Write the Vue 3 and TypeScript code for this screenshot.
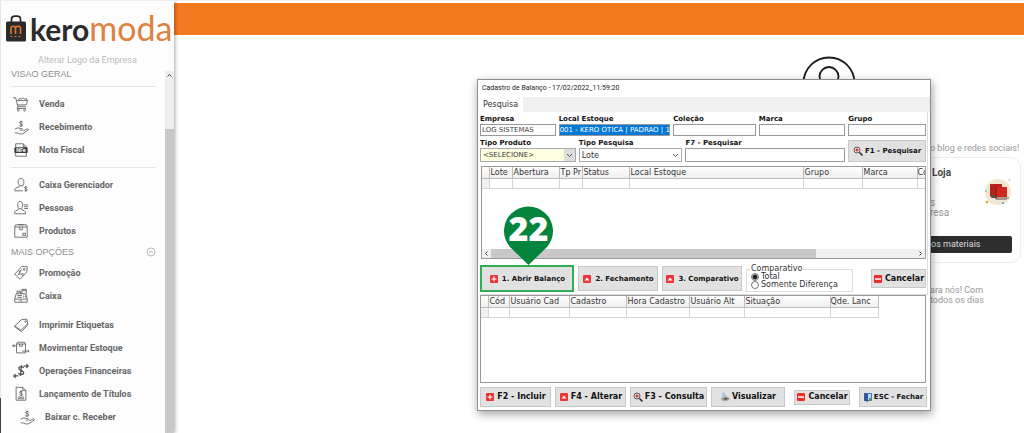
<script setup lang="ts">
import { ref } from 'vue'

interface MenuItem { label: string; icon: string; gapBefore?: boolean; nested?: boolean }

const hand = 'M8 1.5v7M10 3C9 1.8 6.4 2 6.4 3.4S10 4.6 10 6.2 7 8 6 6.8M1 11l3-1.500 3 .5 2.500.5c1 .5.5 1.500-.5 1.500H6.500M1 15l3 .3 3 1.200 3-.5 6-4c.6-1-.5-1.700-1.500-1.200L10.500 13'
const shapes: Record<string, string> = {
  cart: 'M-1 1.500h3l2.500 10h9M3 4.500h12.500l-1.500 5H4.200M5 4.500l1.500-2.500 2 1 2-1.500 1.500 1.500 2-.5.5 2M4.500 11.500l-1 2h10M5 14.500a1 1 0 1 0 .1 0M12 14.500a1 1 0 1 0 .1 0',
  hand,
  invoice: 'M2 5V1.500h8.500L14 5M10.500 1.500V5H14M2 12v3.500h12V12',
  personCash: 'M8 1C3.500 1 3.800 9 8 9.500S12.500 1 8 1M6 9v1.500L2 12c-1 .6-1 2-1 3h9M10 9v1M15 11c-1-1-3-.6-3 .6s3 .8 3 2.200-2.300 1.700-3.200.6M13.400 10v6',
  people: 'M7 1C3 1 3.500 9 7 9.500S11 1 7 1M5 9v1.500L1.500 12C.6 13 .8 14 .8 15h12.400c0-1 0-2.400-1-3L9 10.500V9M11 5h5M11.500 7h4.500M11.500 9h4.500',
  box: 'M1 4l1-2.500h12L15 4M1 4h14v11.500H1zM6.500 4v3h3V4M10 11h3v2.500h-3zM5 1.500h6',
  promo: 'M9 1l6 .5-.5 6L7 15.500 1 10zM11.500 3.500a1 1 0 1 0 .1 0M8 6C6.500 5.500 5.500 6.500 6.500 8s1 3-.8 2M8.500 4.500l-4 6.500M9.500 9a1 1 0 1 0 .1 0',
  register: 'M1 12l1.500-6h11L15 12v3.500H1zM1 12h14M3.500 6V3h4v3M9 6V1h5v5M4 8h5M4 10h5M11 8v2M13 8v2M9.500 2.500h4M6.500 14h3M5 4.500h1.500',
  tag: 'M8.500 2.500l6-.5 1 5L8 14.500 1 9.500zM13 3.800a.7.7 0 1 0 .1 0M1 9.500l.5 1.500 7 5 7-7.500V7',
  move: 'M3 4l1-2h8l1 2v10H3zM3 4h10M6.500 4v2.500h3V4M-1.500 6h4.500M.5 4.500L-1.500 6l2 1.500M9.500 12h7.500M15.500 10.500l1.500 1.500-1.500 1.500',
  finance: 'M11 5C10 3 5.500 3 5.500 5.500S11 8 11 10.500 6.500 13 5 11M8.800 2L7.200 14M11 3h4.500M14 1l2 2-2 2M5 14H.5M2 12L0 14l2 2',
  title: 'M2.500 1H10l3.500 3.500v11h-11zM10 1v3.500h3.500M9.800 6C9 5 6.500 5 6.500 6.500s3.300 1 3.300 2.500-2.300 1.500-3.300.6M8.200 4.500v6M4.500 12h7M4.500 13.800h7',
}

const firstItems: MenuItem[] = [
  { label: 'Venda', icon: 'cart' },
  { label: 'Recebimento', icon: 'hand' },
  { label: 'Nota Fiscal', icon: 'invoice' },
]
const secondItems: MenuItem[] = [
  { label: 'Caixa Gerenciador', icon: 'personCash' },
  { label: 'Pessoas', icon: 'people' },
  { label: 'Produtos', icon: 'box' },
]
const moreItems: MenuItem[] = [
  { label: 'Promoção', icon: 'promo' },
  { label: 'Caixa', icon: 'register' },
  { label: 'Imprimir Etiquetas', icon: 'tag', gapBefore: true },
  { label: 'Movimentar Estoque', icon: 'move' },
  { label: 'Operações Financeiras', icon: 'finance' },
  { label: 'Lançamento de Títulos', icon: 'title' },
  { label: 'Baixar c. Receber', icon: 'hand', nested: true },
]
const groups = [firstItems, secondItems, moreItems]

const lotColumns = ['', 'Lote', 'Abertura', 'Tp Pr', 'Status', 'Local Estoque', 'Grupo', 'Marca', 'Co']
const entryColumns = ['', 'Cód', 'Usuário Cad', 'Cadastro', 'Hora Cadastro', 'Usuário Alt', 'Situação', 'Qde. Lanc']

const company = ref('LOG SISTEMAS')
const stock = ref('001 - KERO OTICA | PADRAO | 1')
const collection = ref('')
const brand = ref('')
const group = ref('')
const search = ref('')
const compare = ref('total')
</script>

<template>
  <div class="page">
    <aside class="sidebar">
      <div class="logo">
        <svg class="bag" viewBox="0 0 20 27" aria-hidden="true">
          <path d="M5.500 8V4.500C5.500 2.500 7 1.200 9 1.200h2c2 0 3.500 1.300 3.500 3.300V8" fill="none" stroke="#2b2b2d" stroke-width="1.800" />
          <rect x="0" y="6.500" width="20" height="20" rx="1.500" fill="#2b2b2d" />
          <path d="M5 19v-5.500c0-3 4.500-3 4.500 0V19M9.500 13.500c0-3 5-3 5 0V19" fill="none" stroke="#e2762b" stroke-width="1.600" />
          <path d="M4.500 21.500h11" stroke="#e2762b" stroke-width="1" stroke-dasharray="2 2" />
        </svg>
        <span class="wordmark"><b>kero</b><span>moda</span></span>
      </div>
      <a class="change-logo" href="#">Alterar Logo da Empresa</a>
      <div class="scroller">
        <nav class="menu">
          <h2 class="overview">VISÃO GERAL</h2>
          <template v-for="(items, g) in groups" :key="g">
            <hr v-if="g < 2">
            <h2 v-else class="more">MAIS OPÇÕES
              <svg viewBox="0 0 10 10" aria-hidden="true"><circle cx="5" cy="5" r="4" /><path d="M3 6l2-2 2 2" /></svg>
            </h2>
            <ul>
              <li v-for="item in items" :key="item.label" :class="{ gap: item.gapBefore, nested: item.nested }">
                <a href="#">
                  <svg class="icon" :class="item.icon" viewBox="-1 0 18 17" aria-hidden="true">
                    <path :d="shapes[item.icon]" />
                    <template v-if="item.icon === 'invoice'">
                      <rect x="0.500" y="5.500" width="15" height="6.500" rx="1" fill="#3d3d3d" stroke="none" />
                      <text x="8" y="10.800" text-anchor="middle">NFe</text>
                    </template>
                  </svg>
                  {{ item.label }}
                </a>
              </li>
            </ul>
          </template>
        </nav>
        <div class="track" aria-hidden="true">
          <svg viewBox="0 0 9 9"><path d="M2.500 5.500l2-2 2 2" /></svg>
          <div class="thumb"></div>
        </div>
      </div>
    </aside>

    <main>
      <div class="topbar"></div>
      <svg class="avatar" viewBox="0 0 54 54" aria-hidden="true"><circle cx="27" cy="27" r="25.500" /><circle cx="27" cy="20.500" r="9.500" /></svg>
      <section class="news">
        <p class="social">o blog e redes sociais!</p>
        <article class="card">
          <h3>Loja</h3>
          <svg class="books" viewBox="0 0 28 28" aria-hidden="true">
            <circle cx="14" cy="14" r="13" fill="#f2e6d2" />
            <path d="M6 6h12v14H8l-2-2z" fill="#b5231b" /><path d="M6 17h12v3H8z" fill="#5c514d" />
            <path d="M12 9h11v13H12z" fill="#d2261e" /><path d="M12 19h11v3H12z" fill="#a7958e" /><path d="M12 9v12" stroke="#741b17" />
            <circle cx="3" cy="24" r="1.500" fill="#e8b33d" /><circle cx="24" cy="20" r="1" fill="#4caf91" /><circle cx="25.500" cy="2" r="1.200" fill="#efd2c0" /><circle cx="2" cy="13" r="1" fill="#7bc4b4" /><circle cx="19" cy="25" r="1" fill="#41a3a0" />
          </svg>
          <p>s<br>resa</p>
          <button type="button">os materiais</button>
        </article>
        <p class="follow">ara nós! Com<br>todos os dias</p>
      </section>
    </main>

    <section class="dialog" role="dialog" aria-labelledby="dialog-title">
      <h1 id="dialog-title">Cadastro de Balanço - 17/02/2022_11:59:20</h1>
      <div class="tabs" role="tablist"><button type="button" role="tab" aria-selected="true">Pesquisa</button></div>
      <form class="panel" @submit.prevent>
        <div class="fields upper">
          <label>Empresa<input v-model="company" type="text"></label>
          <label>Local Estoque<input v-model="stock" class="selected" type="text"></label>
          <label>Coleção<input v-model="collection" type="text"></label>
          <label>Marca<input v-model="brand" type="text"></label>
          <label>Grupo<input v-model="group" type="text"></label>
        </div>
        <div class="fields lower">
          <label>Tipo Produto
            <span class="select product"><select><option>&lt;SELECIONE&gt;</option></select><svg viewBox="0 0 9 9" aria-hidden="true"><path d="M2 3.500l2.500 2.500L7 3.500" /></svg></span>
          </label>
          <label>Tipo Pesquisa
            <span class="select"><select><option>Lote</option></select><svg viewBox="0 0 9 9" aria-hidden="true"><path d="M2 3.500l2.500 2.500L7 3.500" /></svg></span>
          </label>
          <label><span class="inset">F7 - Pesquisar</span><input v-model="search" type="text"></label>
          <button type="button" class="btn search">
            <svg class="glyph" viewBox="0 0 10 10" aria-hidden="true"><circle cx="4" cy="4" r="3" fill="#eee" stroke="#555" /><path d="M2.500 4h3M4 2.500v3" stroke="#e12626" stroke-width="1.500" /><path d="M6.500 6.500L9.500 9.500" stroke="#222" stroke-width="1.500" /></svg>F1 - Pesquisar
          </button>
        </div>
        <div class="grid lots">
          <table>
            <thead><tr><th v-for="(c, i) in lotColumns" :key="i">{{ c }}</th></tr></thead>
            <tbody><tr><td v-for="(c, i) in lotColumns" :key="i"></td></tr></tbody>
          </table>
          <div class="hscroll" aria-hidden="true">
            <svg viewBox="0 0 9 9"><path d="M5.500 2.500l-2 2 2 2" /></svg><div class="hthumb"></div><svg viewBox="0 0 9 9"><path d="M3.500 2.500l2 2-2 2" /></svg>
          </div>
        </div>
        <div class="actions">
          <button type="button" class="btn open"><svg class="glyph" viewBox="0 0 10 10" aria-hidden="true"><rect x="1" y="1" width="8" height="8" rx="1" fill="#ed3434" /><path d="M2.500 5h5M5 2.500v5" stroke="#fff" stroke-width="1.200" /></svg>1. Abrir Balanço</button>
          <button type="button" class="btn"><svg class="glyph" viewBox="0 0 10 10" aria-hidden="true"><rect x="1" y="1" width="8" height="8" rx="1" fill="#ed3434" /><path d="M2.500 6.500L5 3.500l2.500 3z" fill="#fff" /></svg>2. Fechamento</button>
          <button type="button" class="btn"><svg class="glyph" viewBox="0 0 10 10" aria-hidden="true"><rect x="1" y="1" width="8" height="8" rx="1" fill="#ed3434" /><path d="M2.500 6.500L5 3.500l2.500 3z" fill="#fff" /></svg>3. Comparativo</button>
          <fieldset>
            <legend>Comparativo</legend>
            <label><input v-model="compare" type="radio" name="compare" value="total">Total</label>
            <label><input v-model="compare" type="radio" name="compare" value="difference">Somente Diferença</label>
          </fieldset>
          <button type="button" class="btn cancel"><svg class="glyph" viewBox="0 0 10 10" aria-hidden="true"><rect x="1" y="1" width="8" height="8" rx="1" fill="#f02d2d" /><path d="M2 5h6" stroke="#fff" stroke-width="1.500" /></svg>Cancelar</button>
        </div>
      </form>
      <div class="grid entries">
        <table>
          <thead><tr><th v-for="(c, i) in entryColumns" :key="i">{{ c }}</th></tr></thead>
          <tbody><tr><td v-for="(c, i) in entryColumns" :key="i"></td></tr></tbody>
        </table>
      </div>
      <footer>
        <button type="button" class="btn"><svg class="glyph" viewBox="0 0 10 10" aria-hidden="true"><rect x="1" y="1" width="8" height="8" rx="1" fill="#ed3434" /><path d="M2.500 5h5M5 2.500v5" stroke="#fff" stroke-width="1.200" /></svg>F2 - Incluir</button>
        <button type="button" class="btn"><svg class="glyph" viewBox="0 0 10 10" aria-hidden="true"><rect x="1" y="1" width="8" height="8" rx="1" fill="#ed3434" /><path d="M2.500 6.500L5 3.500l2.500 3z" fill="#fff" /></svg>F4 - Alterar</button>
        <button type="button" class="btn"><svg class="glyph" viewBox="0 0 10 10" aria-hidden="true"><circle cx="4" cy="4" r="3" fill="#eee" stroke="#555" /><path d="M2.500 4h3M4 2.500v3" stroke="#e12626" stroke-width="1.500" /><path d="M6.500 6.500L9.500 9.500" stroke="#222" stroke-width="1.500" /></svg>F3 - Consulta</button>
        <button type="button" class="btn"><svg class="glyph" viewBox="0 0 10 10" aria-hidden="true"><path d="M2 1l3-.5.5 4L2.500 5z" fill="#9fc5e6" /><path d="M1 6l5-2 3.500 2v2L5 9.500 1 8z" fill="#aaa" /><path d="M3 6.500l3-1L8.500 7 5 8z" fill="#555" /></svg>Visualizar</button>
        <button type="button" class="btn cancel"><svg class="glyph" viewBox="0 0 10 10" aria-hidden="true"><rect x="1" y="1" width="8" height="8" rx="1" fill="#f02d2d" /><path d="M2 5h6" stroke="#fff" stroke-width="1.500" /></svg>Cancelar</button>
        <button type="button" class="btn close"><svg class="glyph" viewBox="0 0 10 10" aria-hidden="true"><path d="M1.500 1.500h7v7h-7z" fill="#b9d5ea" stroke="#466db5" /><path d="M1 1l4 1v8L1 8.500z" fill="#3653a8" /><path d="M6 6h2.500v3H6z" fill="#41a451" /></svg>ESC - Fechar</button>
      </footer>
      <div class="pin" aria-hidden="true">
        <svg viewBox="0 0 49 59"><path d="M24.500 59L6 41A24.500 24.500 0 1 1 43 41z" fill="#04843c" /></svg>
        <span>22</span>
      </div>
    </section>
  </div>
</template>

<style>
body { margin: 0; }
</style>

<style scoped>
* { box-sizing: border-box; }
.page { position: relative; display: flex; height: 100vh; overflow: hidden; background: #fff; border-top: 1px solid #eee; font-family: "Liberation Sans", Arial, sans-serif; font-size: 9px; color: #999; }
h1, h2, h3, p, ul { margin: 0; padding: 0; font-weight: 400; list-style: none; }
a { color: inherit; text-decoration: none; }

.sidebar { position: relative; z-index: 1; display: flex; flex-direction: column; flex: none; width: 174px; background: #fdfdfd; border-left: 1px solid #e6e6e6; box-shadow: 1px 0 4px rgba(0, 0, 0, .35); }
.sidebar::after { content: ""; position: absolute; left: -1px; bottom: 0; width: 1px; height: 35px; background: #444; }
.logo { display: flex; align-items: flex-end; height: 41px; padding-left: 5px; gap: 4px; }
.bag { width: 20px; height: 27px; }
.wordmark { display: flex; align-items: baseline; height: 32px; font-family: Lato, sans-serif; font-size: 34px; line-height: 36px; color: #dd8240; }
.wordmark b { font-size: 30px; font-weight: 700; color: #2b2b2d; }
.change-logo { padding: 13px 0 0; text-align: center; font-family: Roboto, sans-serif; line-height: 10px; color: #bbb; }
.scroller { display: flex; flex: 1; min-height: 0; margin-top: 6px; overflow: hidden; }
.menu { flex: 1; padding: 0 9px 0 10px; min-width: 0; }
.menu h2 { font-size: 9px; line-height: 12px; color: #8d8d8d; }
.menu .overview { height: 15px; margin-top: -3px; }
.menu .more { display: flex; align-items: center; justify-content: space-between; height: 19px; }
.more svg { width: 10px; height: 10px; fill: none; stroke: #aaa; stroke-width: .8; }
.menu hr { height: 1px; margin: 3px 0 5px; border: 0; background: #e4e4e4; }
.menu ul + hr { margin: 6px 0 5px; }
.menu li a { display: flex; align-items: center; gap: 10px; height: 23px; padding-left: 2px; font-family: Roboto, sans-serif; font-weight: 700; color: #666; white-space: nowrap; }
.menu li.gap { padding-top: 6px; }
.menu li.nested { padding-left: 6px; }
.icon { width: 16px; height: 16px; overflow: visible; fill: none; stroke: #555; stroke-width: .9; }
.icon.finance { stroke-width: 1.500; }
.icon text { font-size: 6px; fill: #fff; stroke: none; }
.track { width: 9px; background: #eee; }
.track > svg { display: block; width: 9px; height: 9px; margin-bottom: 49px; fill: none; stroke: #444; }
.thumb { height: 100%; background: #c9c9c9; }

main { flex: 1; min-width: 0; padding-top: 2px; }
.topbar { height: 32px; background: #f47920; }
.avatar { display: block; width: 54px; height: 54px; margin: 21px 168px 0 auto; fill: none; stroke: #1c1c1c; stroke-width: 1.800; }
.news { width: 134px; margin: 33px 3px 0 auto; font-family: Roboto, sans-serif; }
.social { padding-left: 43px; line-height: 11px; white-space: nowrap; }
.card { position: relative; height: 106px; margin-top: 3px; padding: 9px 8px 9px 44px; border: 1px solid #eee; border-radius: 10px; display: flex; flex-direction: column; }
.card h3 { font-size: 10px; line-height: 12px; font-weight: 700; color: #444; }
.card .books { position: absolute; right: 8px; top: 20px; width: 28px; height: 28px; }
.card p { margin: 19px 0 0 -2px; line-height: 10px; font-size: 10px; }
.card button { margin: auto 0 0 -34px; height: 17px; padding: 0 0 0 33px; border: 0; border-radius: 2px; background: #2d2d2d; color: #ddd; font: 9px/17px Roboto, sans-serif; text-align: left; }
.follow { padding-left: 43px; margin-top: 22px; line-height: 10px; }

.dialog { position: absolute; z-index: 2; left: 477px; top: 78px; width: 454px; display: flex; flex-direction: column; padding: 0 3px 3px 2px; background: #fff; border: 1px solid #8f8f8f; box-shadow: 1px 3px 9px rgba(0, 0, 0, .38); font-family: "DejaVu Sans", Verdana, sans-serif; font-size: 8px; color: #333; }
.dialog h1 { padding-left: 2px; height: 17px; font: 7px/17px Roboto, sans-serif; color: #222; }
.tabs { height: 15px; margin: 0 -3px 0 -2px; background: #efefef; }
.tabs button { height: 15px; padding: 0 5px; border: 0; background: #fff; font: 8px/14px "DejaVu Sans", sans-serif; color: #333; }
.panel { display: flex; flex-direction: column; border-right: 1px solid #ddd; margin-right: -1px; border-bottom: 1px solid #ddd; padding: 3px 1px 2px 0; }
.fields { display: grid; column-gap: 3px; }
.upper { grid-template-columns: 76fr 112fr 83fr 87fr 78fr; margin-bottom: 3px; }
.lower { grid-template-columns: 96fr 103fr 161fr 78fr; align-items: end; margin-bottom: 4px; }
.fields label { display: flex; flex-direction: column; min-width: 0; font-size: 7px; line-height: 9px; font-weight: 700; color: #111; white-space: nowrap; }
.fields input { width: 100%; height: 12px; padding: 0 1px; border: 1px solid #999; border-radius: 0; background: #fff; font: 7px/9px "DejaVu Sans", sans-serif; color: #444; }
.fields input.selected { padding: 0; background: #0078d7; color: #fff; }
.lower input, .select { height: 14px; }
.select { position: relative; display: flex; border: 1px solid #aaa; background: #fff; }
.select select { flex: 1; min-width: 0; padding: 0 2px; border: 0; appearance: none; background: transparent; font: 8px/11px "DejaVu Sans", sans-serif; color: #333; }
.select svg { width: 11px; height: 12px; padding: 1px; fill: none; stroke: #555; }
.select.product { background: #ffffe1; }
.select.product select { font-size: 7px; }
.select.product svg { background: #ddd; }
.inset { padding-left: 1px; }
.btn { display: flex; align-items: center; justify-content: center; gap: 2px; min-width: 0; height: 20px; padding: 0; border: 1px solid #c8c8c8; border-radius: 0; background: #e1e1e1; font: 700 8px/10px "DejaVu Sans", Verdana, sans-serif; color: #111; white-space: nowrap; }
.btn.search { height: 22px; font-size: 7px; }
.glyph { flex: none; width: 10px; height: 10px; }

.grid { display: flex; flex-direction: column; border: 1px solid #999; overflow: hidden; background: #fff; }
.lots { height: 93px; margin-left: 1px; }
.entries { height: 88px; margin: 0 1px 4px 0; }
table { table-layout: fixed; border-collapse: collapse; }
.lots table { width: 446px; }
.entries table { width: 398px; }
th, td { height: 11px; padding: 0 0 0 1px; border-right: 1px solid #bbb; border-bottom: 1px solid #bbb; overflow: hidden; font-size: 8px; line-height: 10px; font-weight: 400; text-align: left; white-space: nowrap; }
th { padding-top: 1px; background: linear-gradient(#fff, #eee); }
th:last-child { padding-left: 0; }
td { height: 10px; border-color: #d5d5d5; }
td:first-child { background: #f1f1f1; }
.lots th:last-child, .lots td:last-child { border-right: 0; }
.lots th:nth-child(1) { width: 7px; }
.lots th:nth-child(2) { width: 23px; }
.lots th:nth-child(3) { width: 47px; }
.lots th:nth-child(4) { width: 23px; }
.lots th:nth-child(5) { width: 47px; }
.lots th:nth-child(6) { width: 174px; }
.lots th:nth-child(7) { width: 59px; }
.lots th:nth-child(8) { width: 55px; }
.entries th:nth-child(1) { width: 7px; }
.entries th:nth-child(2) { width: 21px; }
.entries th:nth-child(3) { width: 60px; }
.entries th:nth-child(4) { width: 57px; }
.entries th:nth-child(5) { width: 63px; }
.entries th:nth-child(6) { width: 55px; }
.entries th:nth-child(7) { width: 86px; }
.hscroll { display: flex; height: 9px; margin-top: auto; background: #f0f0f0; }
.hscroll svg { width: 9px; height: 9px; fill: none; stroke: #444; }
.hthumb { width: 325px; background: #c8c8c8; margin-right: auto; }

.actions { display: flex; align-items: center; gap: 4px; margin-top: 6px; height: 27px; }
.actions .btn { width: 80px; height: 25px; gap: 3px; font-size: 7px; }
.actions .btn.open { width: 94px; height: 27px; border: 2px solid #2fae54; }
fieldset { width: 107px; height: 27px; margin: 0; padding: 0; border: 1px solid #ddd; line-height: 8px; }
legend { height: 8px; margin-left: 3px; padding: 0 1px; line-height: 8px; }
fieldset label { display: flex; align-items: center; gap: 2px; height: 8px; padding-left: 4px; white-space: nowrap; }
fieldset input { appearance: none; width: 8px; height: 8px; margin: 0; border: 1px solid #777; border-radius: 50%; background: #fff; }
fieldset input:checked { background: radial-gradient(#222 0 2px, #fff 3px); }
.actions .btn.cancel { width: 55px; height: 19px; margin-left: auto; gap: 2px; font-size: 8px; }

footer { display: flex; align-items: center; gap: 4px; }
footer .btn { width: 71px; }
footer .btn:nth-child(3) { width: 77px; }
footer .btn:nth-child(4) { width: 74px; }
footer .btn.cancel { width: 56px; height: 15px; margin: 0 auto; }
footer .btn.close { width: 68px; gap: 1px; font-size: 7px; }

.pin { position: absolute; left: 26px; top: 126px; width: 49px; height: 59px; }
.pin svg { display: block; width: 49px; height: 59px; }
.pin span { position: absolute; inset: 0 0 14px; display: flex; align-items: center; justify-content: center; font: 800 34px/45px "Open Sans", sans-serif; color: #fff; }
</style>
